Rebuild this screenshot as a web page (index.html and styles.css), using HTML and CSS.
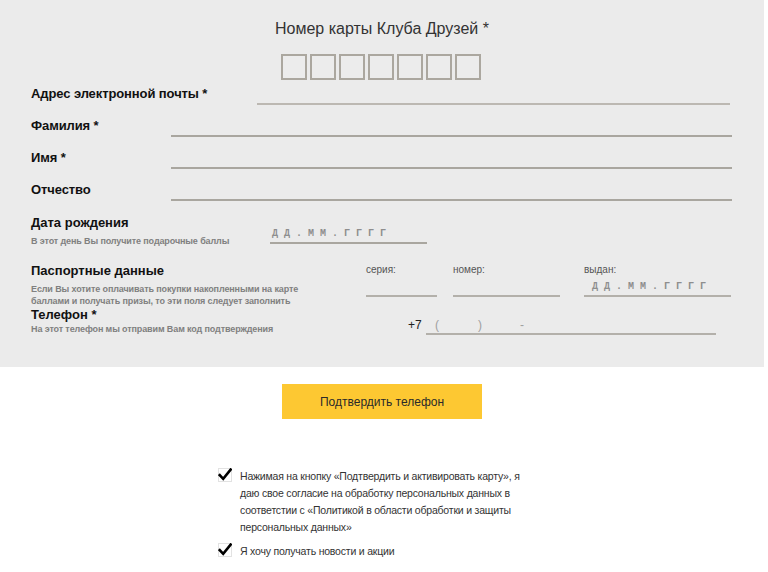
FILE: index.html
```html
<!DOCTYPE html>
<html lang="ru">
<head>
<meta charset="utf-8">
<title>Клуб Друзей</title>
<link rel="stylesheet" href="styles.css">
</head>
<body>
<div class="page">
  <div class="panel">
    <h1 class="title">Номер карты Клуба Друзей *</h1>
    <div class="card-boxes">
      <span class="box"></span><span class="box"></span><span class="box"></span><span class="box"></span><span class="box"></span><span class="box"></span><span class="box"></span>
    </div>
    <div class="fields">
      <div class="row row-first"><div class="label">Адрес электронной почты *</div><div class="line line-email"></div></div>
      <div class="row"><div class="label">Фамилия *</div><div class="line"></div></div>
      <div class="row"><div class="label">Имя *</div><div class="line"></div></div>
      <div class="row"><div class="label">Отчество</div><div class="line"></div></div>
    </div>

    <div class="section section-date">
      <div class="info info-date">
        <div class="section-title">Дата рождения</div>
        <div class="hint">В этот день Вы получите подарочные баллы</div>
      </div>
      <div class="mask-field date-field"><span class="mask">Д Д . М М . Г Г Г Г</span></div>
    </div>

    <div class="section section-passport">
      <div class="info info-passport">
        <div class="section-title">Паспортные данные</div>
        <div class="hint">Если Вы хотите оплачивать покупки накопленными на карте<br>баллами и получать призы, то эти поля следует заполнить</div>
      </div>
      <div class="pcol pcol-series"><div class="caption">серия:</div><div class="pline"></div></div>
      <div class="pcol pcol-number"><div class="caption">номер:</div><div class="pline"></div></div>
      <div class="pcol pcol-issued"><div class="caption">выдан:</div><div class="pline mask-field issued-field"><span class="mask">Д Д . М М . Г Г Г Г</span></div></div>
    </div>

    <div class="section section-phone">
      <div class="info info-phone">
        <div class="section-title">Телефон *</div>
        <div class="hint hint-phone">На этот телефон мы отправим Вам код подтверждения</div>
      </div>
      <div class="phone">
        <span class="prefix">+7</span>
        <div class="phone-line"><span class="p-open">(</span><span class="p-close">)</span><span class="p-dash">-</span></div>
      </div>
    </div>
  </div>

  <div class="actions">
    <button class="btn" type="button">Подтвердить телефон</button>
  </div>

  <div class="agreements">
    <label class="agree">
      <svg class="check" width="14" height="14" viewBox="0 0 14 14"><rect x="0.5" y="0.5" width="13" height="13" fill="#fff" stroke="#e2e2e2"/><path d="M1.8 7.2 L5.2 10.8 L12.6 1.6" fill="none" stroke="#000" stroke-width="2.6" stroke-linecap="square"/></svg>
      <span class="agree-text">Нажимая на кнопку «Подтвердить и активировать карту», я<br>даю свое согласие на обработку персональных данных в<br>соответстии с «Политикой в области обработки и защиты<br>персональных данных»</span>
    </label>
    <label class="agree agree-news">
      <svg class="check" width="14" height="14" viewBox="0 0 14 14"><rect x="0.5" y="0.5" width="13" height="13" fill="#fff" stroke="#e2e2e2"/><path d="M1.8 7.2 L5.2 10.8 L12.6 1.6" fill="none" stroke="#000" stroke-width="2.6" stroke-linecap="square"/></svg>
      <span class="agree-text">Я хочу получать новости и акции</span>
    </label>
  </div>
</div>
</body>
</html>
```

FILE: styles.css
```css
* { box-sizing: border-box; }

html, body {
  margin: 0;
  padding: 0;
  background: #ffffff;
}

body {
  font-family: "Liberation Sans", Arial, sans-serif;
  color: #222;
}

.page {
  width: 764px;
}

.panel {
  background: #ebebeb;
  height: 367px;
  padding-top: 20px;
}

.title {
  margin: 0;
  font-size: 16px;
  line-height: 18px;
  font-weight: normal;
  color: #333;
  text-align: center;
}

.card-boxes {
  display: flex;
  justify-content: center;
  gap: 3px;
  margin-top: 16px;
  padding-right: 2px;
}

.box {
  width: 26px;
  height: 26px;
  border: 2px solid #aba79f;
  background: #ececec;
}

.row {
  display: flex;
  align-items: flex-end;
  height: 32px;
  padding: 0 32px 0 31px;
}

.row-first {
  height: 25px;
}

.label {
  width: 140px;
  flex: none;
  font-size: 13px;
  line-height: 15px;
  font-weight: bold;
  color: #111;
  margin-bottom: 4px;
  white-space: nowrap;
  letter-spacing: -0.1px;
}

.line {
  flex: 1;
  height: 2px;
  background: #a9a69f;
}

.line-email {
  margin-left: 86px;
  margin-right: 2px;
  background: #bcb8b2;
}

.section {
  display: flex;
  align-items: flex-start;
  padding-left: 31px;
}

.section-date { margin-top: 14px; }
.section-passport { margin-top: 16px; }

.info { flex: none; }
.info-date { width: 239px; }
.info-passport { width: 335px; }
.info-phone { width: 377px; }

.section-title {
  font-size: 13px;
  line-height: 16px;
  font-weight: bold;
  color: #111;
  white-space: nowrap;
}

.hint {
  margin-top: 4px;
  font-size: 9px;
  line-height: 12px;
  font-weight: bold;
  color: #808080;
  white-space: nowrap;
  letter-spacing: -0.12px;
}

.hint-phone { margin-top: 0; }

.mask-field {
  display: flex;
  align-items: flex-end;
  border-bottom: 2px solid #a9a69f;
  padding-bottom: 2px;
}

.date-field {
  width: 157px;
  height: 29px;
  padding-left: 2px;
}

.mask {
  font-family: "Liberation Mono", "Courier New", monospace;
  font-size: 10px;
  line-height: 12px;
  font-weight: bold;
  color: #8e8e8e;
  white-space: pre;
}

.pcol { flex: none; }
.pcol-series { width: 71px; }
.pcol-number { width: 107px; margin-left: 16px; }
.pcol-issued { width: 147px; margin-left: 24px; }

.caption {
  font-size: 10px;
  line-height: 12px;
  color: #555;
  padding-top: 1px;
  height: 12px;
}

.pline {
  height: 22px;
  border-bottom: 2px solid #b3b0aa;
}

.issued-field {
  padding-left: 8px;
  border-bottom-color: #b3b0aa;
}

.phone {
  display: flex;
  align-items: flex-end;
  height: 28px;
}

.prefix {
  font-size: 12px;
  line-height: 14px;
  color: #222;
  padding-bottom: 3px;
  width: 18px;
}

.phone-line {
  width: 290px;
  height: 28px;
  border-bottom: 2px solid #b3b0aa;
  display: flex;
  align-items: flex-end;
  padding-left: 9px;
  padding-bottom: 1px;
  font-size: 12px;
  line-height: 14px;
  color: #a0a0a0;
}

.p-close { margin-left: 39px; }
.p-dash { margin-left: 38px; }

.actions {
  display: flex;
  justify-content: center;
  margin-top: 17px;
}

.btn {
  width: 200px;
  height: 35px;
  border: none;
  margin: 0;
  padding: 0;
  background: #fdc832;
  font-family: "Liberation Sans", Arial, sans-serif;
  font-size: 12px;
  color: #2a2a2a;
  cursor: pointer;
}

.agreements {
  margin-top: 49px;
  padding-left: 218px;
}

.agree {
  display: flex;
  align-items: flex-start;
  gap: 8px;
}

.agree-news { margin-top: 7px; }

.check {
  flex: none;
}

.agree-text {
  font-size: 10.5px;
  line-height: 17px;
  letter-spacing: -0.2px;
  color: #333;
  white-space: nowrap;
}
```
